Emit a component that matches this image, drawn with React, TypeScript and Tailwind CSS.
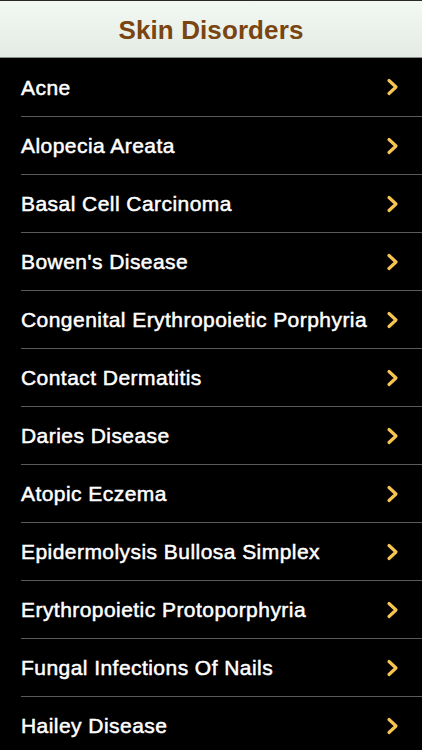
const items = [
  'Acne',
  'Alopecia Areata',
  'Basal Cell Carcinoma',
  "Bowen's Disease",
  'Congenital Erythropoietic Porphyria',
  'Contact Dermatitis',
  'Daries Disease',
  'Atopic Eczema',
  'Epidermolysis Bullosa Simplex',
  'Erythropoietic Protoporphyria',
  'Fungal Infections Of Nails',
  'Hailey Disease',
];

function Chevron() {
  return (
    <svg width="14" height="18" viewBox="0 0 14 18" className="shrink-0">
      <path d="M3 2.5 L10 9 L3 15.5" fill="none" stroke="#f6c453" strokeWidth="3.2" strokeLinecap="round" strokeLinejoin="round" />
    </svg>
  );
}

export default function App() {
  return (
    <div className="w-[422px] h-[750px] overflow-hidden bg-black font-['Liberation_Sans',Arial,sans-serif]">
      {/* Nav bar */}
      <header className="h-[58px] border-t border-[#2a2a2a] border-b border-b-[#8a8f8a] bg-gradient-to-b from-[#f1f9f2] to-[#e3ebe4] flex items-center justify-center">
        <h1 className="text-[26px] font-bold text-[#7a4510] tracking-[0.1px] mt-[2px]">Skin Disorders</h1>
      </header>

      {/* List */}
      <ul>
        {items.map((name, i) => (
          <li key={name} className="pl-[21px]">
            <div className={`h-[58px] flex items-center pr-[22px] ${i > 0 ? 'border-t border-[#5a5a5a]' : ''}`}>
              <span className="flex-1 text-white text-[21px] tracking-[0.45px] [-webkit-text-stroke:0.5px_white] whitespace-nowrap mt-[1px]">{name}</span>
              <Chevron />
            </div>
          </li>
        ))}
      </ul>
    </div>
  );
}
